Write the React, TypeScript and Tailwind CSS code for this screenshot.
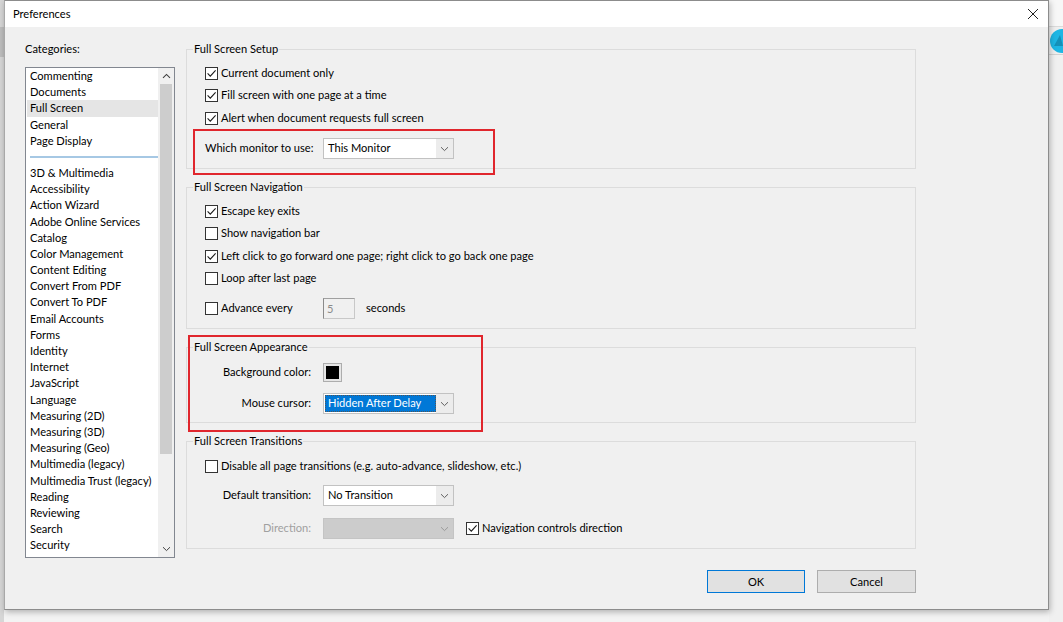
import React from "react";

const categoriesTop = ["Commenting", "Documents", "Full Screen", "General", "Page Display"];
const categoriesRest = [
  "3D & Multimedia",
  "Accessibility",
  "Action Wizard",
  "Adobe Online Services",
  "Catalog",
  "Color Management",
  "Content Editing",
  "Convert From PDF",
  "Convert To PDF",
  "Email Accounts",
  "Forms",
  "Identity",
  "Internet",
  "JavaScript",
  "Language",
  "Measuring (2D)",
  "Measuring (3D)",
  "Measuring (Geo)",
  "Multimedia (legacy)",
  "Multimedia Trust (legacy)",
  "Reading",
  "Reviewing",
  "Search",
  "Security",
];

function Check({ checked }: { checked: boolean }) {
  return (
    <span className="w-[13px] h-[13px] border border-[#333333] bg-white flex items-center justify-center shrink-0">
      {checked && (
        <svg width="11" height="11" viewBox="0 0 11 11">
          <path d="M1.6 5.4 L4.3 8.2 L9.6 2.4" stroke="#1a1a1a" strokeWidth="1.1" fill="none" />
        </svg>
      )}
    </span>
  );
}

function Chevron({ color = "#606060" }: { color?: string }) {
  return (
    <svg width="9" height="6" viewBox="0 0 9 6">
      <path d="M1 1.2 L4.5 4.6 L8 1.2" stroke={color} strokeWidth="1" fill="none" />
    </svg>
  );
}

function CheckRow({ checked, label }: { checked: boolean; label: string }) {
  return (
    <div className="h-[22.5px] flex items-center gap-[3px]">
      <Check checked={checked} />
      <span className="whitespace-nowrap">{label}</span>
    </div>
  );
}

function Dropdown({
  value,
  selected,
  disabled,
}: {
  value?: string;
  selected?: boolean;
  disabled?: boolean;
}) {
  if (disabled) {
    return (
      <div className="w-[131px] h-[21px] border border-[#c4c4c4] bg-[#cccccc] flex shrink-0">
        <div className="flex-1" />
        <div className="w-[17px] flex items-center justify-center">
          <Chevron color="#9a9a9a" />
        </div>
      </div>
    );
  }
  return (
    <div className="w-[131px] h-[21px] border border-[#c2c2c2] bg-white flex shrink-0">
      <div className="flex-1 flex items-center pl-[1px] py-[1px]">
        {selected ? (
          <div className="h-full w-full bg-[#0078d7] text-white flex items-center pl-[3px] outline-dotted outline-1 outline-[#555] -outline-offset-1">
            {value}
          </div>
        ) : (
          <span className="pl-[3px]">{value}</span>
        )}
      </div>
      <div className="w-[17px] bg-[#ececec] flex items-center justify-center">
        <Chevron />
      </div>
    </div>
  );
}

function Group({
  title,
  heightClass,
  children,
}: {
  title: string;
  heightClass: string;
  children: React.ReactNode;
}) {
  return (
    <fieldset className={`border border-[#dcdcdc] m-0 p-0 min-w-0 ${heightClass}`}>
      <legend className="ml-[6px] px-[1px] leading-[16px]">{title}</legend>
      {children}
    </fieldset>
  );
}

export default function App() {
  return (
    <div className="w-[1063px] h-[622px] relative overflow-hidden bg-[#f3f3f3] flex items-start text-[11.1px] text-black font-['Lato',sans-serif]">
      {/* left desktop strip */}
      <div className="w-[4px] h-[622px] bg-[#d6d6d6] flex flex-col">
        <div className="h-[27px]" />
        <div className="h-[30px] bg-[#bdbdbd]" />
      </div>

      {/* dialog */}
      <div className="w-[1045px] h-[610px] border border-[#8c8c8c] border-l-[#a8a8a8] bg-[#f0f0f0] flex flex-col shadow-[1px_2px_6px_rgba(0,0,0,0.28)] relative">
        {/* title bar */}
        <div className="h-[26px] bg-white flex items-center justify-between pl-[8px] pr-[8px] shrink-0">
          <span className="leading-[16px]">Preferences</span>
          <svg width="12" height="12" viewBox="0 0 12 12" className="mr-[1px]">
            <path d="M1 1 L11 11 M11 1 L1 11" stroke="#222" strokeWidth="1" />
          </svg>
        </div>

        {/* body */}
        <div className="flex pt-[14px] pl-[20px] gap-[11px]">
          {/* left column */}
          <div className="flex flex-col w-[150px]">
            <div className="leading-[16px]">Categories:</div>
            <div className="mt-[10px] h-[491px] border border-[#828790] bg-white flex">
              <div className="flex-1 flex flex-col pt-0 pl-[1px] overflow-hidden">
                {categoriesTop.map((c) => (
                  <div
                    key={c}
                    className={`h-[16.2px] leading-[16.2px] pl-[3px] whitespace-nowrap ${
                      c === "Full Screen" ? "bg-[#e5e5e5]" : ""
                    }`}
                  >
                    {c}
                  </div>
                ))}
                <div className="h-[16px] flex items-center pl-[3px]">
                  <div className="h-[2px] w-full bg-[#a6c8e4]" />
                </div>
                {categoriesRest.map((c) => (
                  <div key={c} className="h-[16.2px] leading-[16.2px] pl-[3px] whitespace-nowrap">
                    {c}
                  </div>
                ))}
              </div>
              {/* scrollbar */}
              <div className="w-[16px] bg-[#f0f0f0] flex flex-col items-center">
                <div className="h-[16px] flex items-center justify-center">
                  <svg width="9" height="6" viewBox="0 0 9 6">
                    <path d="M1 4.8 L4.5 1.4 L8 4.8" stroke="#404040" strokeWidth="1.1" fill="none" />
                  </svg>
                </div>
                <div className="w-[12px] h-[370px] bg-[#cdcdcd]" />
                <div className="flex-1" />
                <div className="h-[16px] flex items-center justify-center">
                  <Chevron color="#404040" />
                </div>
              </div>
            </div>
          </div>

          {/* right column */}
          <div className="w-[730px] flex flex-col gap-[10px]">
            <Group title="Full Screen Setup" heightClass="h-[128px]">
              <div className="pl-[18px] pt-[5px] flex flex-col">
                <CheckRow checked label="Current document only" />
                <CheckRow checked label="Fill screen with one page at a time" />
                <CheckRow checked label="Alert when document requests full screen" />
                <div className="mt-[8.5px] flex items-center">
                  <span className="w-[118px] whitespace-nowrap">Which monitor to use:</span>
                  <Dropdown value="This Monitor" />
                </div>
              </div>
            </Group>

            <Group title="Full Screen Navigation" heightClass="h-[150px]">
              <div className="pl-[18px] pt-[5px] flex flex-col">
                <CheckRow checked label="Escape key exits" />
                <CheckRow checked={false} label="Show navigation bar" />
                <CheckRow checked label="Left click to go forward one page; right click to go back one page" />
                <CheckRow checked={false} label="Loop after last page" />
                <div className="mt-[8px] flex items-center h-[21px]">
                  <div className="w-[118px] flex items-center gap-[3px]">
                    <Check checked={false} />
                    <span>Advance every</span>
                  </div>
                  <div className="w-[32px] h-[21px] border border-[#c8c8c8] border-l-[#8a8a8a] border-t-[#a0a0a0] bg-[#f0f0f0] text-[#8a8a8a] pl-[3px] leading-[19px]">
                    5
                  </div>
                  <span className="ml-[11px]">seconds</span>
                </div>
              </div>
            </Group>

            <Group title="Full Screen Appearance" heightClass="h-[84px]">
              <div className="pl-[18px] pt-[8px] flex flex-col">
                <div className="flex items-center h-[19px]">
                  <span className="w-[106px] text-right whitespace-nowrap">Background color:</span>
                  <div className="ml-[12px] w-[19px] h-[19px] border border-[#adadad] bg-[#e6e6e6] flex items-center justify-center">
                    <div className="w-[13px] h-[13px] bg-black" />
                  </div>
                </div>
                <div className="mt-[11px] flex items-center">
                  <span className="w-[106px] text-right whitespace-nowrap">Mouse cursor:</span>
                  <div className="ml-[12px]">
                    <Dropdown value="Hidden After Delay" selected />
                  </div>
                </div>
              </div>
            </Group>

            <Group title="Full Screen Transitions" heightClass="h-[116px]">
              <div className="pl-[18px] pt-[6px] flex flex-col">
                <CheckRow checked={false} label="Disable all page transitions (e.g. auto-advance, slideshow, etc.)" />
                <div className="mt-[7.5px] flex items-center">
                  <span className="w-[106px] text-right whitespace-nowrap">Default transition:</span>
                  <div className="ml-[12px]">
                    <Dropdown value="No Transition" />
                  </div>
                </div>
                <div className="mt-[12px] flex items-center">
                  <span className="w-[106px] text-right whitespace-nowrap text-[#a0a0a0]">Direction:</span>
                  <div className="ml-[12px]">
                    <Dropdown disabled />
                  </div>
                  <div className="ml-[12px] flex items-center gap-[3px]">
                    <Check checked />
                    <span className="whitespace-nowrap">Navigation controls direction</span>
                  </div>
                </div>
              </div>
            </Group>
          </div>
        </div>

        {/* buttons */}
        <div className="mt-[12px] flex justify-end gap-[12px] pr-[132px]">
          <button className="w-[98px] h-[23px] border border-[#0078d7] bg-[#e1e1e1] leading-[21px]">OK</button>
          <button className="w-[99px] h-[23px] border border-[#adadad] bg-[#e1e1e1] leading-[21px]">Cancel</button>
        </div>

        {/* red annotation boxes */}
        <div className="absolute left-[188px] top-[128px] w-[302px] h-[46px] border-2 border-[#e0262d] pointer-events-none" />
        <div className="absolute left-[183px] top-[334px] w-[295px] h-[97px] border-2 border-[#e0262d] pointer-events-none" />
      </div>

      {/* right desktop strip */}
      <div className="flex-1 h-[622px] flex flex-col overflow-hidden">
        <div className="h-[27px] bg-[#f7f7f7] border-b border-[#dadada]" />
        <div className="h-[28px] bg-[#efefef] border-b border-[#d2d2d2] flex items-center">
          <svg width="14" height="24" viewBox="0 0 14 24" className="shrink-0">
            <circle cx="13" cy="12" r="12" fill="#1db6e4" />
            <path d="M5 17 L11 6 L14 17 Z" fill="#1590b8" />
          </svg>
        </div>
        <div className="flex-1 bg-[#f0f0f0]" />
      </div>
    </div>
  );
}
